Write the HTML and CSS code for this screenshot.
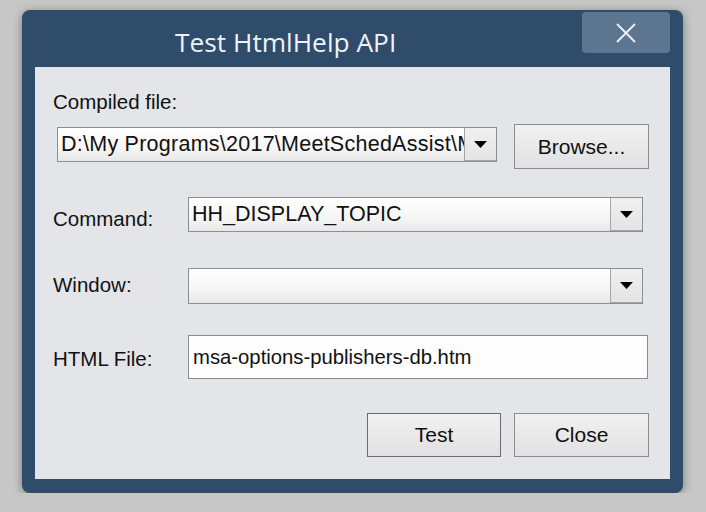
FILE: index.html
```html
<!DOCTYPE html>
<html>
<head>
<meta charset="utf-8">
<link rel="stylesheet" href="styles.css">
</head>
<body>
<div class="window">
  <div class="titlebar">
    <div class="title">Test HtmlHelp API</div>
    <div class="close-btn">
      <svg width="20" height="20" viewBox="0 0 20 20"><path d="M1 1 L19 19 M19 1 L1 19" stroke="#eef2f6" stroke-width="1.8" fill="none"/></svg>
    </div>
  </div>
  <div class="client">
    <div class="label top-label">Compiled file:</div>
    <div class="row row-file">
      <div class="combo combo-file">
        <span class="combo-text">D:\My Programs\2017\MeetSchedAssist\MSA\HelpNDoc\Output</span>
        <span class="drop"><svg width="13" height="7" viewBox="0 0 13 7"><polygon points="0,0 13,0 6.5,7" fill="#000"/></svg></span>
      </div>
      <button class="btn btn-browse">Browse...</button>
    </div>
    <div class="row row-command">
      <div class="label field-label">Command:</div>
      <div class="combo combo-wide">
        <span class="combo-text">HH_DISPLAY_TOPIC</span>
        <span class="drop"><svg width="13" height="7" viewBox="0 0 13 7"><polygon points="0,0 13,0 6.5,7" fill="#000"/></svg></span>
      </div>
    </div>
    <div class="row row-window">
      <div class="label field-label">Window:</div>
      <div class="combo combo-wide combo-tall">
        <span class="combo-text"></span>
        <span class="drop"><svg width="13" height="7" viewBox="0 0 13 7"><polygon points="0,0 13,0 6.5,7" fill="#000"/></svg></span>
      </div>
    </div>
    <div class="row row-html">
      <div class="label field-label">HTML File:</div>
      <div class="textbox">msa-options-publishers-db.htm</div>
    </div>
    <div class="row row-buttons">
      <button class="btn btn-test">Test</button>
      <button class="btn btn-close">Close</button>
    </div>
  </div>
</div>
</body>
</html>
```
FILE: styles.css
```css
* { box-sizing: border-box; }
body {
  margin: 0;
  background: #c7c7c7;
  font-family: "Liberation Sans", Arial, sans-serif;
}
.window {
  margin: 10px 0 0 22px;
  width: 661px;
  height: 483px;
  background: #2f4c6b;
  border-radius: 8px;
  box-shadow: 0 2px 10px rgba(0,0,0,0.4);
  display: flex;
  flex-direction: column;
}
.titlebar {
  height: 57px;
  display: flex;
  align-items: flex-start;
}
.title {
  flex: 1;
  padding-left: 153px;
  padding-top: 17px;
  font-family: "Open Sans", sans-serif;
  font-size: 26.3px;
  line-height: 30px;
  color: #eef2f6;
}
.close-btn {
  width: 88px;
  height: 41px;
  margin-top: 2px;
  margin-right: 13px;
  background: #5c7692;
  border-radius: 4px;
  display: flex;
  align-items: center;
  justify-content: center;
}
.client {
  flex: 1;
  margin: 0 13px 14px;
  background: #e3e5e8;
  padding-top: 23px;
  color: #111;
}
.label {
  font-size: 20.5px;
  line-height: 24px;
}
.top-label { margin-left: 18px; }
.row {
  display: flex;
  align-items: flex-start;
}
.field-label {
  width: 135px;
  margin-left: 18px;
  flex: none;
}
.row-file { margin-top: 10px; height: 45px; }
.row-command { margin-top: 28px; }
.row-command .field-label { padding-top: 10px; }
.row-window { margin-top: 36px; }
.row-window .field-label { padding-top: 5px; }
.row-html { margin-top: 31px; }
.row-html .field-label { padding-top: 12px; }
.row-buttons {
  margin-top: 34px;
  justify-content: flex-end;
  padding-right: 21px;
  gap: 13px;
}
.combo {
  display: flex;
  height: 35px;
  border: 1px solid #8e8e8e;
  background: linear-gradient(#ffffff, #f6f6f6 60%, #e8e8e8);
}
.combo-file {
  margin-left: 22px;
  margin-top: 3px;
  width: 440px;
}
.combo-wide { width: 455px; }
.combo-tall { height: 36px; }
.combo-text {
  flex: 1;
  min-width: 0;
  overflow: hidden;
  white-space: nowrap;
  padding-left: 3px;
  font-size: 21.5px;
  line-height: 33px;
}
.combo-file .combo-text { letter-spacing: 0.25px; }
.drop {
  flex: none;
  width: 32px;
  border-left: 1px solid #a4a4a4;
  border-bottom: 1px solid #a4a4a4;
  background: linear-gradient(#f0f0f0, #e4e4e4);
  display: flex;
  align-items: center;
  justify-content: center;
}
.textbox {
  width: 460px;
  height: 44px;
  border: 1px solid #8a8a8a;
  background: #fdfdfd;
  padding-left: 4px;
  font-size: 20.3px;
  line-height: 42px;
  white-space: nowrap;
}
.btn {
  height: 45px;
  border: 1px solid #8c8c8c;
  background: linear-gradient(#f1f1f1, #e1e1e1);
  font-family: "Liberation Sans", Arial, sans-serif;
  font-size: 21px;
  color: #111;
  padding: 0;
}
.btn-browse { width: 135px; margin-left: 17px; }
.btn-test { width: 134px; height: 44px; border-color: #6c6c6c; }
.btn-close { width: 135px; height: 44px; }
```
